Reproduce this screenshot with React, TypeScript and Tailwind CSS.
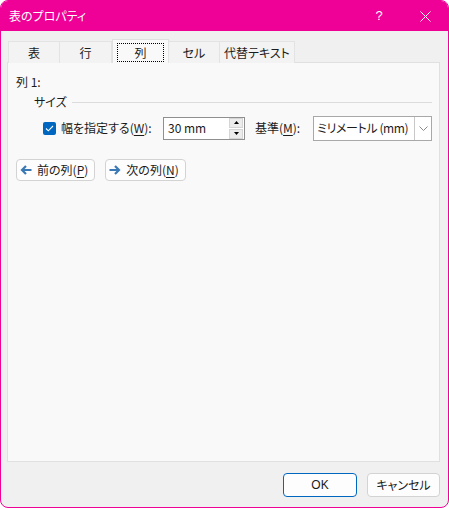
import React from 'react'

const tabs = [
  { label: '表', w: 'w-[52px]' },
  { label: '行', w: 'w-[53px]' },
  { label: '列', w: 'w-[57px]', active: true },
  { label: 'セル', w: 'w-[52px]' },
  { label: '代替テキスト', w: 'w-[76px]' },
]

function Key({ k }: { k: string }) {
  return <span className="underline underline-offset-2">{k}</span>
}

function Arrow({ dir }: { dir: 'left' | 'right' }) {
  return (
    <svg width="12" height="10" viewBox="0 0 12 10" className={dir === 'left' ? '' : 'rotate-180'}>
      <path d="M11.5 5H2.5M6 1L2 5l4 4" fill="none" stroke="#3b78b6" strokeWidth="2.2" />
    </svg>
  )
}

function NavButton({ dir, text, k }: { dir: 'left' | 'right'; text: string; k: string }) {
  return (
    <button className="h-[22px] flex items-center gap-[5px] pl-[3px] pr-[6px] bg-[#fdfdfd] border border-[#d3d3d3] rounded-[4px] text-[12px] leading-none">
      <Arrow dir={dir} />
      <span>
        {text}(<Key k={k} />)
      </span>
    </button>
  )
}

export default function App() {
  return (
    <div className="w-[449px] h-[508px] flex flex-col bg-[#f0f0f0] border border-[#ef0096] rounded-[8px] overflow-hidden text-[12px] text-[#1b1b1b] font-['Noto_Sans_CJK_JP',sans-serif] [font-feature-settings:'palt']">
      {/* Title bar */}
      <div className="h-[30px] shrink-0 bg-[#ef0096] flex items-center text-white">
        <div className="pl-[8px] flex-1 text-[12px]">表のプロパティ</div>
        <div className="w-[46px] h-full flex items-center justify-center text-[13px] font-['Liberation_Sans',sans-serif]">?</div>
        <div className="w-[46px] h-full flex items-center justify-center">
          <svg width="11" height="11" viewBox="0 0 11 11">
            <path d="M0.5 0.5l10 10M10.5 0.5l-10 10" stroke="#fff" strokeWidth="1" />
          </svg>
        </div>
      </div>

      {/* Body */}
      <div className="flex-1 flex flex-col pl-[6px] pr-[8px] pt-[8px]">
        <div className="flex items-end h-[24px] pl-[1px] relative z-10">
          {tabs.map((t) =>
            t.active ? (
              <div key={t.label} className={`${t.w} h-[24px] bg-[#f9f9f9] border border-b-0 border-[#e0e0e0] pt-[3px] px-[4px]`}>
                <div className="h-[19px] border border-dotted border-black flex items-center justify-center">{t.label}</div>
              </div>
            ) : (
              <div
                key={t.label}
                className={`${t.w} h-[22px] bg-[#f3f3f3] border border-b-0 border-[#e3e3e3] -ml-px first:ml-0 flex items-center justify-center`}
              >
                {t.label}
              </div>
            )
          )}
        </div>

        <div className="h-[400px] -mt-px bg-[#f9f9f9] border border-[#e0e0e0] pt-[11px] pl-[8px] pr-[7px]">
          <div className="leading-[16px]">列 1:</div>

          <div className="mt-[4px] ml-[18px] flex items-center gap-[5px] leading-[16px]">
            <span>サイズ</span>
            <div className="flex-1 h-px bg-[#dcdcdc]" />
          </div>

          <div className="mt-[6px] ml-[27px] flex items-center h-[24px]">
            <div className="w-[13px] h-[13px] rounded-[2px] bg-[#0067c0] flex items-center justify-center">
              <svg width="9" height="7" viewBox="0 0 9 7">
                <path d="M1 3.5l2.3 2.3L8 1" fill="none" stroke="#fff" strokeWidth="1.1" />
              </svg>
            </div>
            <div className="w-[107px] pl-[5px]">
              幅を指定する(<Key k="W" />):
            </div>
            <div className="w-[82px] h-[23px] bg-white border border-[#8f8f8f] flex items-center">
              <span className="flex-1 pl-[4px]">30 mm</span>
              <div className="w-[15px] h-[21px] flex flex-col gap-px pr-px">
                <div className="flex-1 bg-[#ececec] border border-[#d5d5d5] flex items-center justify-center">
                  <svg width="5" height="3" viewBox="0 0 5 3"><path d="M2.5 0L5 3H0z" fill="#000" /></svg>
                </div>
                <div className="flex-1 bg-[#ececec] border border-[#d5d5d5] flex items-center justify-center">
                  <svg width="5" height="3" viewBox="0 0 5 3"><path d="M0 0h5L2.5 3z" fill="#000" /></svg>
                </div>
              </div>
            </div>
            <div className="w-[68px] pl-[10px]">
              基準(<Key k="M" />):
            </div>
            <div className="w-[119px] h-[25px] bg-white border border-[#a8a8a8] flex items-center">
              <span className="flex-1 pl-[3px] tracking-[-0.4px]">ミリメートル (mm)</span>
              <div className="w-[17px] h-full border-l border-[#c8c8c8] flex items-center justify-center">
                <svg width="9" height="5" viewBox="0 0 9 5">
                  <path d="M0.5 0.5l4 4 4-4" fill="none" stroke="#8a8a8a" strokeWidth="1" />
                </svg>
              </div>
            </div>
          </div>

          <div className="mt-[19px] flex gap-[10px]">
            <NavButton dir="left" text="前の列" k="P" />
            <NavButton dir="right" text="次の列" k="N" />
          </div>
        </div>

        <div className="mt-[11px] mb-[10px] flex justify-end gap-[10px]">
          <button className="w-[74px] h-[24px] rounded-[4px] bg-[#fdfdfd] border border-[#0067c0] font-['Liberation_Sans',sans-serif] text-[12px]">OK</button>
          <button className="w-[73px] h-[24px] rounded-[4px] bg-[#fdfdfd] border border-[#d3d3d3] text-[12px]">キャンセル</button>
        </div>
      </div>
    </div>
  )
}
